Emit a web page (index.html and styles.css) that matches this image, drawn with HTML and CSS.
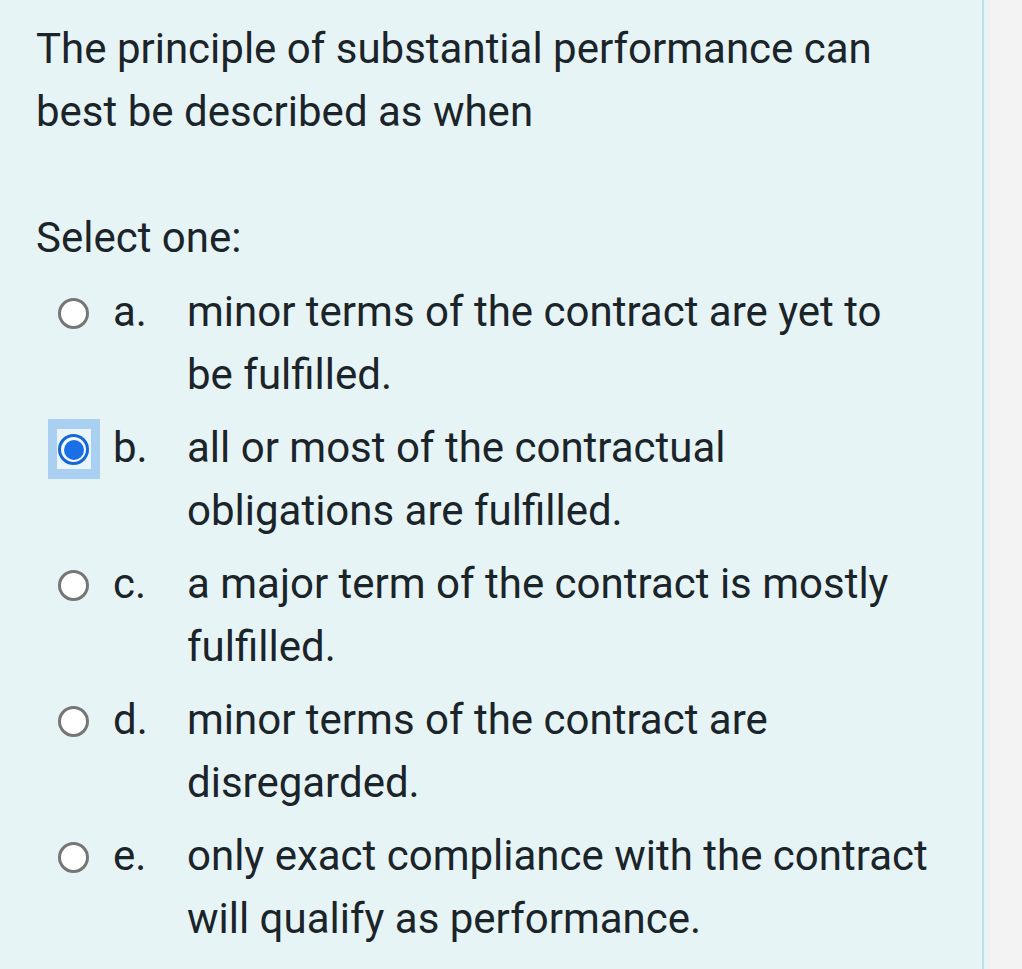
FILE: index.html
```html
<!DOCTYPE html>
<html lang="en">
<head>
<meta charset="utf-8">
<title>Question</title>
<link rel="stylesheet" href="styles.css">
</head>
<body>
<div class="page">
  <main class="panel">
    <p class="question">The principle of substantial performance can best be described as when</p>
    <p class="prompt">Select one:</p>
    <div class="answers">
      <div class="option">
        <div class="radio-col"><span class="radio"></span></div>
        <span class="letter">a.</span>
        <span class="text">minor terms of the contract are yet to be fulfilled.</span>
      </div>
      <div class="option">
        <div class="radio-col"><span class="focus"></span><span class="radio checked"></span></div>
        <span class="letter">b.</span>
        <span class="text">all or most of the contractual obligations are fulfilled.</span>
      </div>
      <div class="option">
        <div class="radio-col"><span class="radio"></span></div>
        <span class="letter">c.</span>
        <span class="text">a major term of the contract is mostly fulfilled.</span>
      </div>
      <div class="option">
        <div class="radio-col"><span class="radio"></span></div>
        <span class="letter">d.</span>
        <span class="text">minor terms of the contract are disregarded.</span>
      </div>
      <div class="option">
        <div class="radio-col"><span class="radio"></span></div>
        <span class="letter">e.</span>
        <span class="text">only exact compliance with the contract will qualify as performance.</span>
      </div>
    </div>
  </main>
  <div class="divider"></div>
  <div class="gutter"></div>
  <div class="side"></div>
</div>
</body>
</html>
```

FILE: styles.css
```css
html, body {
  margin: 0;
  padding: 0;
  height: 100%;
}

body {
  background: #f3f3f3;
  font-family: Roboto, "Liberation Sans", sans-serif;
  color: #1b2429;
}

.page {
  display: flex;
  height: 969px;
  overflow: hidden;
}

.panel {
  width: 982px;
  flex: none;
  box-sizing: border-box;
  background: #e7f4f6;
  padding: 17px 52px 0 36px;
  font-size: 42px;
  line-height: 63px;
}

.divider {
  width: 2px;
  flex: none;
  background: #c4dee6;
}

.gutter {
  width: 6px;
  flex: none;
  background: linear-gradient(to right, #e8f5f8 0, #e8f5f8 4px, #f6eded 4px);
}

.side {
  flex: 1;
  background: #f3f3f3;
}

.question {
  margin: 0 0 63px;
}

.prompt {
  margin: 0 0 11px;
}

.answers {
  display: flex;
  flex-direction: column;
  gap: 10px;
}

.option {
  display: flex;
  align-items: flex-start;
}

.radio-col {
  position: relative;
  width: 77px;
  flex: none;
  box-sizing: border-box;
  padding: 18px 0 0 22px;
  height: 63px;
}

.radio {
  position: relative;
  display: block;
  width: 31px;
  height: 31px;
  box-sizing: border-box;
  border-radius: 50%;
  border: 3px solid #767676;
  background: #ffffff;
}

.radio.checked {
  border-color: #1766d6;
  background: #f4f9fd;
}

.radio.checked::after {
  content: "";
  position: absolute;
  left: 2.5px;
  top: 2.5px;
  width: 20px;
  height: 20px;
  border-radius: 50%;
  background: #1a6fe6;
}

.focus {
  position: absolute;
  left: 12px;
  top: 3px;
  width: 52px;
  height: 60px;
  box-sizing: border-box;
  border-style: solid;
  border-color: #a9d0f0;
  border-width: 10px 9px 10px 9px;
  background: #eaf5fa;
}

.letter {
  width: 74px;
  flex: none;
}

.text {
  flex: 1;
}
```
